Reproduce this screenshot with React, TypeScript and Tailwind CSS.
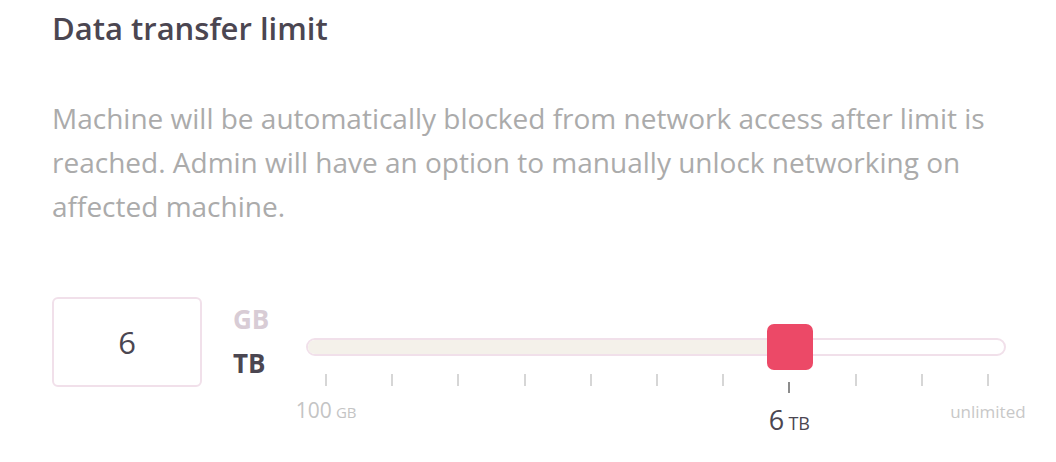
import React from "react";

const ticks = Array.from({ length: 11 }, (_, i) => i);

const App = () => {
  const selected = 7;

  return (
    <div className="w-[1056px] h-[462px] bg-white pl-[52px] pt-[9px] font-['Open_Sans',sans-serif] overflow-hidden">
      {/* Title */}
      <h2 className="text-[31px] leading-[38px] font-semibold text-[#4b4651]">
        Data transfer limit
      </h2>

      {/* Description */}
      <p className="mt-[49px] text-[28px] leading-[44px] text-[#ababab]">
        Machine will be automatically blocked from network access after limit is
        <br />
        reached. Admin will have an option to manually unlock networking on
        <br />
        affected machine.
      </p>

      {/* Limit control */}
      <div className="mt-[69px] flex items-start">
        <div className="w-[150px] h-[90px] border-2 border-[#f1e0ea] rounded-[6px] flex items-center justify-center text-[31px] text-[#4b4651]">
          6
        </div>

        <div className="ml-[31px] w-[73px] pt-[8px] flex flex-col gap-[16px] text-[26px] leading-[28px] font-bold">
          <span className="text-[#d8ccd5]">GB</span>
          <span className="text-[#4b4651]">TB</span>
        </div>

        <div className="w-[700px] pt-[41px]">
          <div className="relative h-[18px] rounded-full border-2 border-[#f1e0ea] bg-white">
            <div className="h-full w-[482px] rounded-l-full bg-[#f4f1ea]" />
            <div className="absolute left-[459px] top-[-16px] w-[46px] h-[46px] rounded-[7px] bg-[#ec4967]" />
          </div>

          <div className="ml-[-13px] mt-[18px] w-[728px] grid grid-cols-11">
            {ticks.map((i) => (
              <div
                key={i}
                className={
                  i === selected
                    ? "flex flex-col items-center pt-[8px]"
                    : "flex flex-col items-center"
                }
              >
                <div
                  className={
                    i === selected
                      ? "w-[2px] h-[11px] bg-[#8c8c8c]"
                      : "w-[2px] h-[12px] bg-[#d6d6d6]"
                  }
                />
                {i === 0 && (
                  <div className="mt-[14px] whitespace-nowrap leading-none text-[#c4c4c4]">
                    <span className="text-[21px]">100</span>{" "}
                    <span className="text-[15px]">GB</span>
                  </div>
                )}
                {i === selected && (
                  <div className="mt-[13px] whitespace-nowrap leading-none text-[#4b4651]">
                    <span className="text-[27px]">6</span>{" "}
                    <span className="text-[18px]">TB</span>
                  </div>
                )}
                {i === 10 && (
                  <div className="mt-[17px] whitespace-nowrap leading-none text-[17px] text-[#c8c8c8]">
                    unlimited
                  </div>
                )}
              </div>
            ))}
          </div>
        </div>
      </div>
    </div>
  );
};

export default App;
